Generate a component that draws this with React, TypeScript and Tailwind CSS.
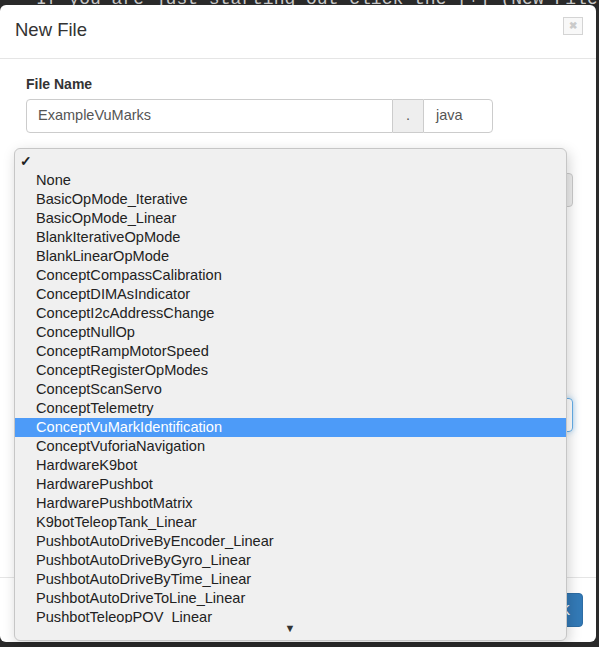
import React from 'react';

const samples = [
  'None',
  'BasicOpMode_Iterative',
  'BasicOpMode_Linear',
  'BlankIterativeOpMode',
  'BlankLinearOpMode',
  'ConceptCompassCalibration',
  'ConceptDIMAsIndicator',
  'ConceptI2cAddressChange',
  'ConceptNullOp',
  'ConceptRampMotorSpeed',
  'ConceptRegisterOpModes',
  'ConceptScanServo',
  'ConceptTelemetry',
  'ConceptVuMarkIdentification',
  'ConceptVuforiaNavigation',
  'HardwareK9bot',
  'HardwarePushbot',
  'HardwarePushbotMatrix',
  'K9botTeleopTank_Linear',
  'PushbotAutoDriveByEncoder_Linear',
  'PushbotAutoDriveByGyro_Linear',
  'PushbotAutoDriveByTime_Linear',
  'PushbotAutoDriveToLine_Linear',
  'PushbotTeleopPOV_Linear',
];

const selected = 'ConceptVuMarkIdentification';

function SampleMenu() {
  return (
    <div className="absolute left-[14px] top-[148px] w-[553px] h-[493px] bg-[#f0f0f0] border border-[#c6c6c6] rounded-[6px] shadow-[2px_4px_14px_rgba(0,0,0,0.18)] flex flex-col overflow-hidden">
      <div className="h-[474px] pt-[3px] overflow-hidden">
        <div className="h-[19px] flex items-center pl-[5px] text-[14px] font-bold text-[#222]">✓</div>
        {samples.map((s) => (
          <div
            key={s}
            className={
              s === selected
                ? 'h-[19px] flex items-center pl-[21px] bg-[#4d9bf8] text-white text-[14.6px]'
                : 'h-[19px] flex items-center pl-[21px] text-[#222] text-[14.6px]'
            }
          >
            {s}
          </div>
        ))}
      </div>
      <div className="flex-1 flex justify-center items-start">
        <span className="ml-[-1px] text-[11px] leading-none text-[#333]">▼</span>
      </div>
    </div>
  );
}

export default function App() {
  return (
    <div className="relative w-[599px] h-[647px] bg-[#2a2a2a] overflow-hidden font-['Liberation_Sans',Arial,sans-serif]">
      {/* editor text peeking above the dialog */}
      <div className="absolute top-0 left-0 w-full h-[7px] overflow-hidden flex">
        <div className="w-[9px] h-full bg-[#111]" />
        <div className="w-[22px] h-full bg-[#5a5a5a]" />
        <div className="w-[10px] h-full bg-[#0c0c0c]" />
        <div className="-mt-[11px] ml-[36px] whitespace-pre font-['Liberation_Mono',monospace] text-[18px] leading-[20px] text-[#c8c8c8]">
          If you are just starting out click the [+] (New File)
        </div>
      </div>

      <div className="absolute left-0 top-[5px] w-[596px] h-[637px] bg-white rounded-[6px] flex flex-col">
        {/* header */}
        <div className="h-[54px] shrink-0 border-b border-[#e5e5e5] flex justify-between px-[15px]">
          <h4 className="mt-[13px] text-[18.5px] leading-[24px] text-[#333]">New File</h4>
          <button className="mt-[12px] mr-[-2px] w-[20px] h-[18px] border border-[#d4d4d4] bg-[#f8f8f8] flex items-center justify-center text-[#cacaca] text-[10px] font-bold leading-none">
            ✖
          </button>
        </div>

        {/* body */}
        <div className="h-[518px] shrink-0 pt-[15px] pl-[26px] pr-[23px]">
          <label className="block text-[14px] leading-[20px] font-bold text-[#333] mb-[5px]">File Name</label>
          <div className="flex w-[467px] h-[34px] text-[14.5px] text-[#555]">
            <div className="flex-1 border border-[#ccc] rounded-l-[4px] flex items-center px-[11px]">ExampleVuMarks</div>
            <div className="w-[30px] border-y border-[#ccc] bg-[#eee] flex items-center justify-center">.</div>
            <div className="w-[70px] border border-[#ccc] rounded-r-[4px] flex items-center px-[12px]">java</div>
          </div>

          <div className="mt-[40px] h-[34px] bg-[#eee] border border-[#ccc] rounded-[4px]" />

          <div className="mt-[191px] h-[34px] border border-[#66afe9] rounded-[4px] shadow-[0_0_6px_rgba(102,175,233,0.6)] flex items-center justify-end pr-[4px]">
            <div className="flex flex-col items-center text-[#444] text-[7px] leading-[7px]">
              <span>▲</span>
              <span>▼</span>
            </div>
          </div>
        </div>

        {/* footer */}
        <div className="flex-1 border-t border-[#e5e5e5] flex justify-end items-start pt-[15px] pr-[13px]">
          <button className="h-[34px] px-[12px] bg-[#337ab7] border border-[#2e6da4] rounded-[4px] text-white text-[14px]">
            OK
          </button>
        </div>
      </div>

      <SampleMenu />
    </div>
  );
}
